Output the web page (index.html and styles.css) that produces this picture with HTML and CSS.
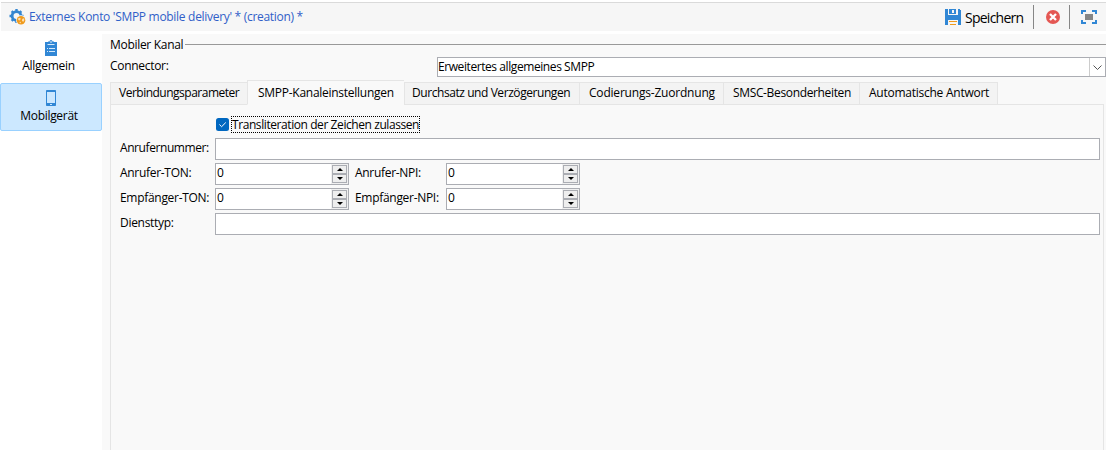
FILE: index.html
```html
<!DOCTYPE html>
<html lang="de">
<head>
<meta charset="utf-8">
<title>Externes Konto</title>
<link rel="stylesheet" href="styles.css">
</head>
<body>
<header class="toolbar">
  <svg class="gear" width="18" height="18" viewBox="0 0 18 18">
    <circle cx="7.5" cy="8" r="4.4" fill="none" stroke="#3586d0" stroke-width="2.8"/>
    <path d="M6.3 1h2.4v2.5H6.3zM6.3 12.5h2.4V15H6.3zM.5 6.8H3v2.4H.5zM12 6.8h2.5v2.4H12zM1.8 4l1.7-1.7 1.8 1.8-1.7 1.7zM9.7 4.1l1.8-1.8L13.2 4l-1.8 1.8zM1.8 12l1.8-1.8 1.7 1.7-1.8 1.8z" fill="#3586d0"/>
    <circle cx="12" cy="12.3" r="5" fill="#f6f6f6"/>
    <circle cx="12" cy="12.3" r="4.3" fill="#ef9a1c"/>
    <path d="M9 10.5l2-.8.8 1.2-1.3 1.5-1.2-.3zM13.2 11l1.6-.8.6 1.8-1 1.7-1.4-.8zM10.4 14l1.2-.2.4 1.3-1 .2z" fill="#fbe0b2"/>
  </svg>
  <h1 class="title">Externes Konto 'SMPP mobile delivery' * (creation) *</h1>
  <button class="save">
    <svg width="16" height="16" viewBox="0 0 16 16" shape-rendering="crispEdges">
      <path d="M0 0h3v6h10V0h1l2 2v14h-3v-6H3v6H0z" fill="#3187d5"/>
      <path d="M4 0h7v5H4z" fill="#3187d5"/>
      <path d="M7 1h2v3H7z" fill="#f6f6f6"/>
      <path d="M0 6h16v5H0z" fill="#3187d5"/>
      <path d="M4 12h8v1H4zM5 15h6v1H5z" fill="#ef9a1c"/>
    </svg>
    <span>Speichern</span>
  </button>
  <i class="separator"></i>
  <svg class="cancel" width="14" height="14" viewBox="0 0 14 14">
    <circle cx="7" cy="7" r="7" fill="#e45753"/>
    <path d="M4 4l6 6M10 4l-6 6" stroke="#fff" stroke-width="2.3"/>
  </svg>
  <i class="separator"></i>
  <svg class="expand" width="16" height="14" viewBox="0 0 16 14" shape-rendering="crispEdges">
    <path d="M5 1H1v3M11 1h4v3M5 13H1v-3M11 13h4v-3" fill="none" stroke="#3187d5" stroke-width="2"/>
    <path d="M4 4h8v6H4z" fill="#868686"/>
  </svg>
</header>
<div class="body">
  <nav class="sidebar">
    <a class="nav-item">
      <svg width="12" height="16" viewBox="0 0 12 16">
        <path d="M0 2h3V1.5h1.5a1.5 1.5 0 0 1 3 0H9V2h3v14H0z" fill="#3187d5"/>
        <path d="M2.5 4h7v1h-7z" fill="#d7eafa"/>
        <circle cx="6" cy="2" r=".8" fill="#fff"/>
        <path d="M2 8h1v1H2zM4 8h6v1H4zM2 11h1v1H2zM4 11h6v1H4z" fill="#d7eafa"/>
      </svg>
      <span>Allgemein</span>
    </a>
    <a class="nav-item selected">
      <svg width="10" height="16" viewBox="0 0 10 16">
        <rect width="10" height="16" rx=".7" fill="#3187d5"/>
        <path d="M1 2h8v11H1z" fill="#cce8ff"/>
        <path d="M4 14h2v1H4z" fill="#cce8ff"/>
      </svg>
      <span>Mobilgerät</span>
    </a>
  </nav>
  <main class="main">
    <div class="group"><span>Mobiler Kanal</span><i class="rule"></i></div>
    <div class="connector">
      <span class="connector-label">Connector:</span>
      <div class="combo"><span class="combo-text">Erweitertes allgemeines SMPP</span>
        <span class="combo-arrow"><svg width="9" height="5" viewBox="0 0 9 5"><path d="M.5.5l4 4 4-4" fill="none" stroke="#555"/></svg></span>
      </div>
    </div>
    <div class="tabs">
      <div class="tab tab1"><span>Verbindungsparameter</span></div>
      <div class="tab tab2 active"><span>SMPP-Kanaleinstellungen</span></div>
      <div class="tab tab3"><span>Durchsatz und Verzögerungen</span></div>
      <div class="tab tab4"><span>Codierungs-Zuordnung</span></div>
      <div class="tab tab5"><span>SMSC-Besonderheiten</span></div>
      <div class="tab tab6"><span>Automatische Antwort</span></div>
    </div>
    <section class="panel">
      <div class="check-row">
        <svg width="13" height="13" viewBox="0 0 13 13"><rect width="13" height="13" rx="2.5" fill="#0067c0"/><path d="M3.4 6.5l2.2 2.2 4.2-4.2" fill="none" stroke="#fff"/></svg>
        <span class="focus">Transliteration der Zeichen zulassen</span>
      </div>
      <div class="row"><label class="caller">Anrufernummer:</label><div class="input"></div></div>
      <div class="row">
        <label>Anrufer-TON:</label>
        <div class="spin"><span>0</span><div class="buttons"><i class="up"></i><i class="down"></i></div></div>
        <label class="second">Anrufer-NPI:</label>
        <div class="spin"><span>0</span><div class="buttons"><i class="up"></i><i class="down"></i></div></div>
      </div>
      <div class="row">
        <label>Empfänger-TON:</label>
        <div class="spin"><span>0</span><div class="buttons"><i class="up"></i><i class="down"></i></div></div>
        <label class="second">Empfänger-NPI:</label>
        <div class="spin"><span>0</span><div class="buttons"><i class="up"></i><i class="down"></i></div></div>
      </div>
      <div class="row"><label>Diensttyp:</label><div class="input"></div></div>
    </section>
  </main>
</div>
</body>
</html>
```
FILE: styles.css
```css
* { box-sizing: border-box; }
body {
  margin: 0;
  width: 1106px;
  height: 450px;
  overflow: hidden;
  display: flex;
  flex-direction: column;
  background: #fff;
  color: #000;
  font: 12px/16px "Open Sans", "Noto Sans", sans-serif;
  letter-spacing: -0.3px;
  white-space: nowrap;
}
svg { display: block; flex: none; }
.toolbar {
  flex: none;
  height: 29px;
  margin: 2px 0 3px 1px;
  border-top: 1px solid #dadada;
  background: #f6f6f6;
  display: flex;
  align-items: center;
}
.gear { margin-left: 8px; }
.title { margin: 0 auto 0 2px; font-size: 12px; font-weight: 400; color: #3060c8; }
.save {
  display: flex;
  align-items: center;
  gap: 4px;
  padding: 0;
  border: 0;
  background: none;
  color: #000;
  font: 14px/18px "Open Sans", "Noto Sans", sans-serif;
  letter-spacing: -0.75px;
  width: 88px;
}
.save span { padding-top: 1px; }
.separator { width: 1px; height: 24px; background: #868686; }
.cancel { margin: 0 9px 0 12px; }
.expand { margin: 0 9px 0 11px; }
.body { flex: 1; display: flex; background: #f9f9f9; min-height: 0; }
.sidebar { width: 102px; background: #fff; display: flex; flex-direction: column; }
.nav-item {
  display: flex;
  flex-direction: column;
  align-items: center;
  height: 48px;
  padding-top: 6px;
  gap: 2px;
}
.nav-item span { margin-right: 5px; }
.selected {
  margin-top: 1px;
  border: 1px solid #99d1ff;
  border-radius: 2px;
  background: #cce8ff;
}
.selected span { margin-right: 4px; }
.main { flex: 1; padding-left: 8px; display: flex; flex-direction: column; min-width: 0; }
.group { height: 20px; display: flex; align-items: center; gap: 2px; }
.group span { width: 73px; padding-top: 1px; }
.rule { flex: 1; height: 1px; background: #999; }
.connector { display: flex; height: 20px; margin-top: 3px; }
.connector-label { width: 327px; padding-top: 1px; }
.combo { flex: 1; display: flex; justify-content: space-between; border: 1px solid #abadb3; background: #fff; }
.combo-text { line-height: 18px; letter-spacing: -0.42px; }
.combo-arrow { width: 16px; border-left: 1px solid #ccc; display: grid; place-items: center; }
.tabs { display: flex; align-items: flex-end; height: 25px; margin-top: 3px; z-index: 1; }
.tab {
  height: 23px;
  border: 1px solid #e5e5e5;
  border-right: 0;
  background: #f3f3f3;
  padding: 2px 0 0 8px;
}
.tab1 { width: 137px; letter-spacing: -0.5px; }
.tab2 { width: 157px; letter-spacing: -0.27px; }
.tab3 { width: 175px; padding-left: 7px; letter-spacing: -0.43px; }
.tab4 { width: 144px; padding-left: 9px; letter-spacing: -0.2px; }
.tab5 { width: 136px; padding-left: 9px; letter-spacing: -0.35px; }
.tab6 { width: 139px; padding-left: 9px; letter-spacing: -0.25px; border-right: 1px solid #e5e5e5; }
.tab.active { height: 25px; padding: 4px 0 0 10px; background: #f9f9f9; border-bottom-color: #f9f9f9; }
.tab2 + .tab3 { border-left: 1px solid #e5e5e5; }
.panel {
  flex: 1;
  margin: -1px 2px 0 0;
  border: solid #e5e5e5;
  border-width: 1px 1px 0;
  padding: 11px 3px 0 9px;
}
.check-row { display: flex; align-items: center; height: 17px; gap: 2px; margin-left: 96px; }
.focus { width: 189px; height: 17px; line-height: 16px; letter-spacing: -0.42px; border: 1px dotted #000; }
.row { display: flex; height: 22px; margin-top: 3px; }
.check-row + .row { margin-top: 5px; }
.row label { width: 95px; line-height: 20px; }
.row .caller { letter-spacing: -0.42px; }
.row .second { width: 91px; }
.input { flex: 1; border: 1px solid #abadb3; background: #fff; }
.spin {
  width: 134px;
  border: 1px solid #abadb3;
  background: #fff;
  display: flex;
  justify-content: space-between;
  padding-left: 1px;
  line-height: 18px;
}
.spin + .second { margin-left: 6px; }
.buttons { width: 17px; padding: 1px; background: #f0f0f0; }
.buttons i {
  display: grid;
  place-items: center;
  height: 9px;
  border: 1px solid #abadb3;
  background: #eee;
}
.buttons i::before { content: ""; border: solid transparent; border-width: 0 3px 3px; border-bottom-color: #000; }
.buttons .down::before { border-width: 3px 3px 0; border-color: #000 transparent transparent; }
```
